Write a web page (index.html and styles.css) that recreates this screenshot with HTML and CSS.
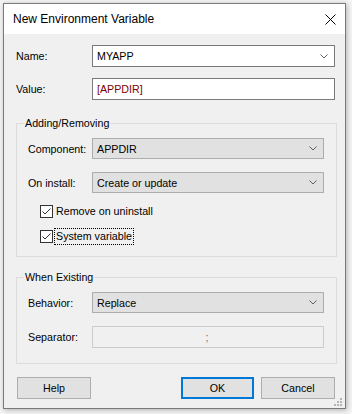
FILE: index.html
```html
<!DOCTYPE html>
<html>
<head>
<meta charset="utf-8">
<link rel="stylesheet" href="styles.css">
</head>
<body>
<div class="window">
  <div class="titlebar">
    <span class="title">New Environment Variable</span>
    <svg class="close" width="11" height="11" viewBox="0 0 11 11"><path d="M0.5 0.5 L10.5 10.5 M10.5 0.5 L0.5 10.5" stroke="#000" stroke-width="1" fill="none"/></svg>
  </div>
  <div class="content">
    <div class="row">
      <span class="lbl">Name:</span>
      <div class="field edit">
        <span class="val">MYAPP</span>
        <svg class="chev" width="8" height="5" viewBox="0 0 8 5"><path d="M0.5 0.5 L4 4 L7.5 0.5" stroke="#606060" fill="none"/></svg>
      </div>
    </div>
    <div class="row r2">
      <span class="lbl">Value:</span>
      <div class="field edit">
        <span class="val prop">[APPDIR]</span>
      </div>
    </div>

    <fieldset class="group g1">
      <legend>Adding/Removing</legend>
      <div class="row">
        <span class="lbl2">Component:</span>
        <div class="field combo">
          <span class="val">APPDIR</span>
          <svg class="chev" width="8" height="5" viewBox="0 0 8 5"><path d="M0.5 0.5 L4 4 L7.5 0.5" stroke="#606060" fill="none"/></svg>
        </div>
      </div>
      <div class="row r3">
        <span class="lbl2">On install:</span>
        <div class="field combo">
          <span class="val">Create or update</span>
          <svg class="chev" width="8" height="5" viewBox="0 0 8 5"><path d="M0.5 0.5 L4 4 L7.5 0.5" stroke="#606060" fill="none"/></svg>
        </div>
      </div>
      <div class="check c1">
        <span class="box"><svg width="11" height="11" viewBox="0 0 11 11"><path d="M1.5 5.5 L4 8 L9.5 2.5" stroke="#333" stroke-width="1" fill="none"/></svg></span>
        <span class="ctext">Remove on uninstall</span>
      </div>
      <div class="check c2">
        <span class="box"><svg width="11" height="11" viewBox="0 0 11 11"><path d="M1.5 5.5 L4 8 L9.5 2.5" stroke="#333" stroke-width="1" fill="none"/></svg></span>
        <span class="ctext focus">System variable</span>
      </div>
    </fieldset>

    <fieldset class="group g2">
      <legend>When Existing</legend>
      <div class="row">
        <span class="lbl2">Behavior:</span>
        <div class="field combo">
          <span class="val">Replace</span>
          <svg class="chev" width="8" height="5" viewBox="0 0 8 5"><path d="M0.5 0.5 L4 4 L7.5 0.5" stroke="#606060" fill="none"/></svg>
        </div>
      </div>
      <div class="row r3">
        <span class="lbl2">Separator:</span>
        <div class="field disabled">
          <span class="sep">;</span>
        </div>
      </div>
    </fieldset>

    <div class="buttons">
      <div class="btn help">Help</div>
      <div class="spacer"></div>
      <div class="btn default">OK</div>
      <div class="btn cancel">Cancel</div>
    </div>
  </div>
  <svg class="grip" width="9" height="9" viewBox="0 0 9 9">
    <rect x="6" y="0" width="2" height="2" fill="#b4b4b4"/>
    <rect x="3" y="3" width="2" height="2" fill="#b4b4b4"/>
    <rect x="6" y="3" width="2" height="2" fill="#b4b4b4"/>
    <rect x="0" y="6" width="2" height="2" fill="#b4b4b4"/>
    <rect x="3" y="6" width="2" height="2" fill="#b4b4b4"/>
    <rect x="6" y="6" width="2" height="2" fill="#b4b4b4"/>
  </svg>
</div>
</body>
</html>
```

FILE: styles.css
```css
* { box-sizing: border-box; }

html, body {
  margin: 0;
  padding: 0;
}

body {
  background: #f4f4f4;
  font-family: "Liberation Sans", Arial, sans-serif;
  font-size: 10.7px;
  color: #000;
  padding: 3px 0 0 3px;
  width: 352px;
  height: 414px;
  overflow: hidden;
}

.window {
  position: relative;
  width: 343px;
  height: 406px;
  border: 1px solid #7a7a7a;
  background: #f0f0f0;
  box-shadow: 1px 1px 5px rgba(0, 0, 0, 0.28);
  display: flex;
  flex-direction: column;
}

.titlebar {
  height: 30px;
  background: #fff;
  display: flex;
  align-items: center;
  justify-content: space-between;
  padding: 0 9px 0 9px;
  flex: none;
}

.title {
  font-size: 12px;
  color: #000;
  padding-bottom: 1px;
}

.close {
  display: block;
  margin-top: 1px;
}

.content {
  padding: 11px 9px 0 12px;
  display: flex;
  flex-direction: column;
}

.row {
  display: flex;
  align-items: center;
}

.r2 { margin-top: 11px; }
.r3 { margin-top: 13px; }

.lbl {
  width: 76px;
  flex: none;
}

.lbl2 {
  width: 64px;
  flex: none;
}

.field {
  position: relative;
  display: flex;
  align-items: center;
  justify-content: space-between;
  padding: 0 6px 0 4px;
}

.field.edit {
  width: 243px;
  height: 22px;
  background: #fff;
  border: 1px solid #7a7a7a;
}

.field.combo {
  width: 232px;
  height: 21px;
  background: #e1e1e1;
  border: 1px solid #adadad;
}

.field.disabled {
  width: 232px;
  height: 22px;
  background: #f0f0f0;
  border: 1px solid #cccccc;
  justify-content: center;
}

.sep {
  color: #6d6d6d;
}

.prop {
  color: #800000;
}

.chev {
  display: block;
}

.group {
  margin: 0;
  min-inline-size: 0;
  width: 321px;
  border: 1px solid #dcdcdc;
  padding: 8px 12px 11px 11px;
}

.group legend {
  line-height: 14px;
  padding: 0 1px;
  margin-left: -4px;
}

.g1 { margin-top: 16px; }
.g2 { margin-top: 13px; padding-bottom: 15px; }

.check {
  display: flex;
  align-items: center;
  height: 17px;
  padding-left: 12px;
}

.c1 { margin-top: 10px; }
.c2 { margin-top: 8px; }

.box {
  width: 13px;
  height: 13px;
  border: 1px solid #333;
  background: #fff;
  flex: none;
  display: flex;
}

.ctext {
  margin-left: 1px;
  line-height: 15px;
  padding: 0 1px;
  border: 1px solid transparent;
}

.ctext.focus {
  border: 1px dotted #000;
}

.buttons {
  display: flex;
  margin-top: 13px;
  gap: 7px;
}

.spacer { flex: 1; }

.btn {
  height: 22px;
  width: 74px;
  background: #e1e1e1;
  border: 1px solid #adadad;
  display: flex;
  align-items: center;
  justify-content: center;
}

.help { margin-left: 1px; }

.btn.default {
  border: 2px solid #0078d7;
  width: 73px;
}

.cancel { margin-right: 1px; }

.grip {
  position: absolute;
  right: 2px;
  bottom: 1px;
}
```
